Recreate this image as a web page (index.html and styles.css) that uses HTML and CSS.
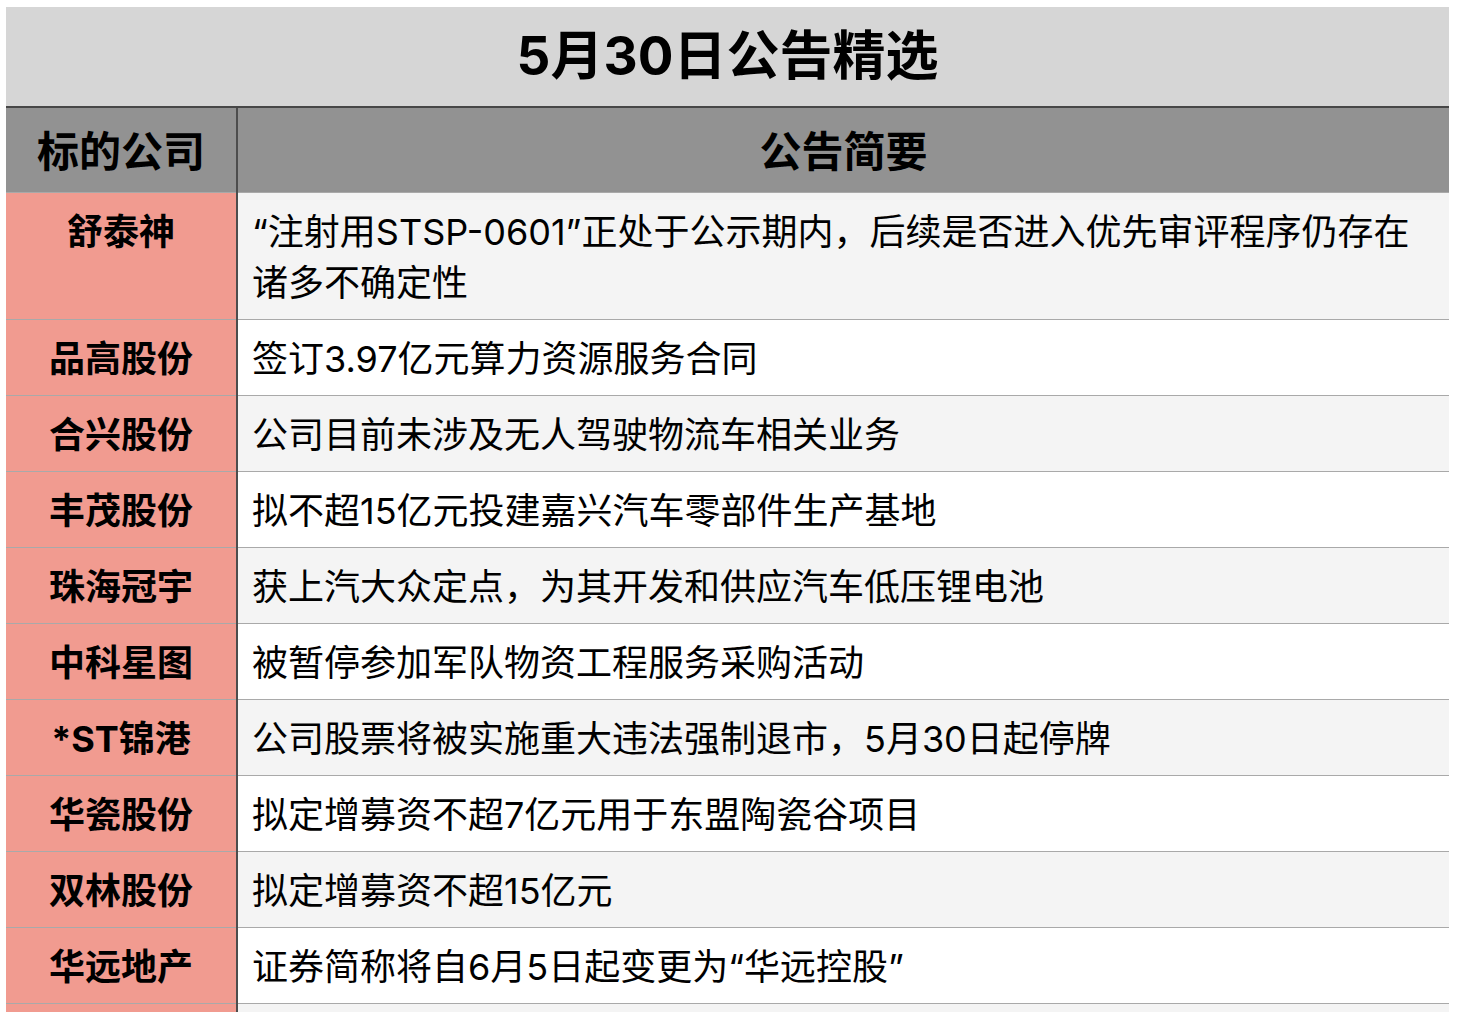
FILE: index.html
```html
<!DOCTYPE html>
<html lang="zh-CN">
<head>
<meta charset="utf-8">
<title>5月30日公告精选</title>
<link rel="stylesheet" href="styles.css">
</head>
<body>
<div class="sheet">
  <div class="title">5月30日公告精选</div>
  <table class="grid">
    <thead>
      <tr class="head">
        <th class="c-name">标的公司</th>
        <th class="c-desc">公告简要</th>
      </tr>
    </thead>
    <tbody>
      <tr class="alt"><td class="c-name">舒泰神</td><td class="c-desc">“注射用STSP-0601”正处于公示期内，后续是否进入优先审评程序仍存在诸多不确定性</td></tr>
      <tr><td class="c-name">品高股份</td><td class="c-desc">签订3.97亿元算力资源服务合同</td></tr>
      <tr class="alt"><td class="c-name">合兴股份</td><td class="c-desc">公司目前未涉及无人驾驶物流车相关业务</td></tr>
      <tr><td class="c-name">丰茂股份</td><td class="c-desc">拟不超15亿元投建嘉兴汽车零部件生产基地</td></tr>
      <tr class="alt"><td class="c-name">珠海冠宇</td><td class="c-desc">获上汽大众定点，为其开发和供应汽车低压锂电池</td></tr>
      <tr><td class="c-name">中科星图</td><td class="c-desc">被暂停参加军队物资工程服务采购活动</td></tr>
      <tr class="alt"><td class="c-name">*ST锦港</td><td class="c-desc">公司股票将被实施重大违法强制退市，5月30日起停牌</td></tr>
      <tr><td class="c-name">华瓷股份</td><td class="c-desc">拟定增募资不超7亿元用于东盟陶瓷谷项目</td></tr>
      <tr class="alt"><td class="c-name">双林股份</td><td class="c-desc">拟定增募资不超15亿元</td></tr>
      <tr><td class="c-name">华远地产</td><td class="c-desc">证券简称将自6月5日起变更为“华远控股”</td></tr>
      <tr class="alt"><td class="c-name">&nbsp;</td><td class="c-desc">&nbsp;</td></tr>
    </tbody>
  </table>
</div>
</body>
</html>
```

FILE: styles.css
```css
html, body {
  margin: 0;
  padding: 0;
  background: #ffffff;
}

body {
  font-family: Inter, "Noto Sans CJK SC", sans-serif;
  color: #000;
  height: 1012px;
  overflow: hidden;
}

.sheet {
  margin: 7px 0 0 6px;
  width: 1443px;
}

.title {
  height: 99px;
  background: #d6d6d6;
  border-bottom: 2px solid #474747;
  display: flex;
  align-items: center;
  justify-content: center;
  font-size: 53px;
  font-weight: 700;
  line-height: 1;
}

.grid {
  width: 1443px;
  border-collapse: collapse;
  table-layout: fixed;
}

.grid th,
.grid td {
  padding: 14px 14px 10px;
  border-bottom: 1px solid #a9a9a9;
  vertical-align: top;
  line-height: 51px;
}

.c-name {
  width: 202px;
  text-align: center;
  font-weight: 700;
  font-size: 36px;
  background: #f19b90;
  border-right: 2px solid #4d4d4d;
}

.grid .c-desc {
  text-align: left;
  font-size: 36px;
  font-weight: 400;
  background: #ffffff;
  padding-right: 28px;
}

.alt .c-desc {
  background: #f4f4f4;
}

.head th {
  height: 60px;
  line-height: 60px;
  background: #929292;
  font-size: 42px;
  font-weight: 700;
  text-align: center;
  vertical-align: middle;
}

.grid .head .c-desc {
  background: #929292;
  font-size: 42px;
  font-weight: 700;
  text-align: center;
  padding-right: 14px;
}

.head .c-name {
  background: #929292;
  font-size: 42px;
}
```
